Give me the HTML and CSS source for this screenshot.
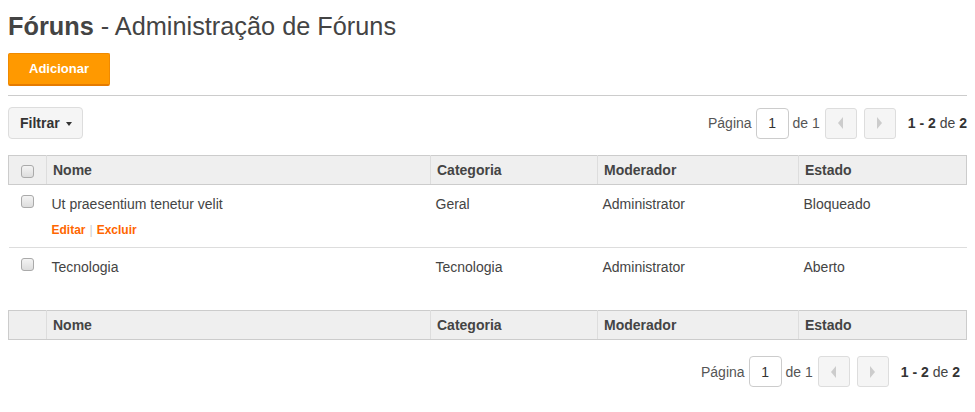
FILE: index.html
```html
<!DOCTYPE html>
<html lang="pt">
<head>
    <meta charset="UTF-8">
    <meta name="viewport" content="width=device-width, initial-scale=1.0">
    <title>Fóruns - Administração de Fóruns</title>
    <link rel="stylesheet" href="styles.css">
</head>
<body>
    <div class="page">
        <h1 class="page-title"><strong>Fóruns</strong> - Administração de Fóruns</h1>
        <div class="actions">
            <button type="button" class="btn-add">Adicionar</button>
        </div>

        <div class="toolbar">
            <button type="button" class="btn-filter">Filtrar <span class="caret"></span></button>
            <div class="pager">
                <span>Página</span>
                <input type="text" class="pager-input" value="1">
                <span>de 1</span>
                <button type="button" class="pager-btn"><span class="arrow-left"></span></button>
                <button type="button" class="pager-btn next"><span class="arrow-right"></span></button>
                <span class="pager-total"><b>1 - 2</b> de <b>2</b></span>
            </div>
        </div>

        <table class="grid">
            <colgroup>
                <col class="col-check">
                <col class="col-name">
                <col class="col-cat">
                <col class="col-mod">
                <col>
            </colgroup>
            <thead>
                <tr>
                    <th class="check"><input type="checkbox"></th>
                    <th>Nome</th>
                    <th>Categoria</th>
                    <th>Moderador</th>
                    <th>Estado</th>
                </tr>
            </thead>
            <tbody>
                <tr>
                    <td class="check"><input type="checkbox"></td>
                    <td>
                        Ut praesentium tenetur velit
                        <div class="row-actions"><a href="#">Editar</a><span class="sep">|</span><a href="#">Excluir</a></div>
                    </td>
                    <td>Geral</td>
                    <td>Administrator</td>
                    <td>Bloqueado</td>
                </tr>
                <tr>
                    <td class="check"><input type="checkbox"></td>
                    <td>
                        Tecnologia
                        <div class="row-actions hidden"><a href="#">Editar</a><span class="sep">|</span><a href="#">Excluir</a></div>
                    </td>
                    <td>Tecnologia</td>
                    <td>Administrator</td>
                    <td>Aberto</td>
                </tr>
            </tbody>
            <tfoot>
                <tr>
                    <th class="check"></th>
                    <th>Nome</th>
                    <th>Categoria</th>
                    <th>Moderador</th>
                    <th>Estado</th>
                </tr>
            </tfoot>
        </table>

        <div class="bottom-pager">
            <div class="pager">
                <span>Página</span>
                <input type="text" class="pager-input" value="1">
                <span>de 1</span>
                <button type="button" class="pager-btn"><span class="arrow-left"></span></button>
                <button type="button" class="pager-btn next"><span class="arrow-right"></span></button>
                <span class="pager-total"><b>1 - 2</b> de <b>2</b></span>
            </div>
        </div>
    </div>
</body>
</html>
```

FILE: styles.css
```css
body {
    margin: 0;
    font-family: "Liberation Sans", Arial, sans-serif;
    font-size: 14px;
    color: #444;
    background: #fff;
}
.page {
    padding: 0 8px;
}
.page-title {
    margin: 0;
    padding-top: 9px;
    font-size: 25.3px;
    font-weight: normal;
    line-height: 34px;
    color: #444;
}
.page-title strong {
    font-weight: bold;
}
.actions {
    padding: 10px 0 9px;
    border-bottom: 1px solid #ccc;
}
.btn-add {
    display: block;
    width: 102px;
    height: 33px;
    padding: 0 0 2px;
    background-color: #f90;
    border: 1px solid #f08a00;
    border-bottom: 2px solid #e57b00;
    border-radius: 2px;
    color: #fff;
    font-family: inherit;
    font-size: 13px;
    font-weight: bold;
    cursor: pointer;
}
.toolbar {
    display: flex;
    justify-content: space-between;
    align-items: center;
    margin-top: 11px;
}
.btn-filter {
    height: 32px;
    padding: 0 10px 0 11px;
    background-color: #f5f5f5;
    border: 1px solid #ddd;
    border-radius: 4px;
    color: #333;
    font-family: inherit;
    font-size: 14px;
    font-weight: bold;
}
.caret {
    display: inline-block;
    margin-left: 2px;
    vertical-align: middle;
    border-top: 4px solid #333;
    border-left: 3px solid transparent;
    border-right: 3px solid transparent;
}
.pager {
    display: flex;
    align-items: center;
    color: #555;
}
.pager-input {
    width: 33px;
    height: 31px;
    margin: 0 4px;
    padding: 0;
    box-sizing: border-box;
    border: 1px solid #ccc;
    border-radius: 4px;
    text-align: center;
    font-family: inherit;
    font-size: 14px;
    color: #333;
}
.pager-btn {
    width: 32px;
    height: 31px;
    margin-left: 5px;
    padding: 0;
    background-color: #f5f5f5;
    border: 1px solid #ddd;
    border-radius: 3px;
    display: flex;
    align-items: center;
    justify-content: center;
}
.pager-btn.next {
    margin-left: 7px;
}
.arrow-left {
    border-right: 5px solid #ccc;
    border-top: 6px solid transparent;
    border-bottom: 6px solid transparent;
}
.arrow-right {
    border-left: 5px solid #ccc;
    border-top: 6px solid transparent;
    border-bottom: 6px solid transparent;
}
.pager-total {
    margin-left: 12px;
    color: #444;
}
.pager-total b {
    color: #333;
}
.grid {
    width: 100%;
    margin-top: 16px;
    border-collapse: collapse;
    table-layout: fixed;
}
.col-check {
    width: 38px;
}
.col-name {
    width: 384px;
}
.col-cat {
    width: 167px;
}
.col-mod {
    width: 201px;
}
.grid th {
    height: 28px;
    padding: 0 6px;
    background-color: #efefef;
    border: 1px solid #ccc;
    border-left-color: #ddd;
    border-right-color: #ddd;
    text-align: left;
    font-weight: bold;
    color: #444;
}
.grid th:first-child {
    border-left-color: #ccc;
}
.grid th:last-child {
    border-right-color: #ccc;
}
.grid th.check,
.grid td.check {
    padding: 0;
    text-align: center;
}
.grid td {
    padding: 9px 5px 9px;
    vertical-align: top;
    line-height: 20px;
    color: #444;
}
.grid td.check {
    padding-top: 5px;
}
.grid tbody tr:first-child td {
    border-bottom: 1px solid #ddd;
}
.grid input[type="checkbox"] {
    appearance: none;
    width: 13px;
    height: 13px;
    margin: 0;
    border: 1px solid #aaa;
    border-radius: 3px;
    background: linear-gradient(#f4f4f4, #ddd);
    vertical-align: middle;
}
.row-actions {
    margin-top: 8px;
    font-size: 12px;
    font-weight: bold;
    line-height: 16px;
}
.row-actions.hidden {
    visibility: hidden;
}
.row-actions a {
    color: #f60;
    text-decoration: none;
}
.row-actions .sep {
    margin: 0 4px;
    color: #ccc;
    font-weight: normal;
}
.bottom-pager {
    display: flex;
    justify-content: flex-end;
    padding-right: 7px;
    margin-top: 16px;
}
```
